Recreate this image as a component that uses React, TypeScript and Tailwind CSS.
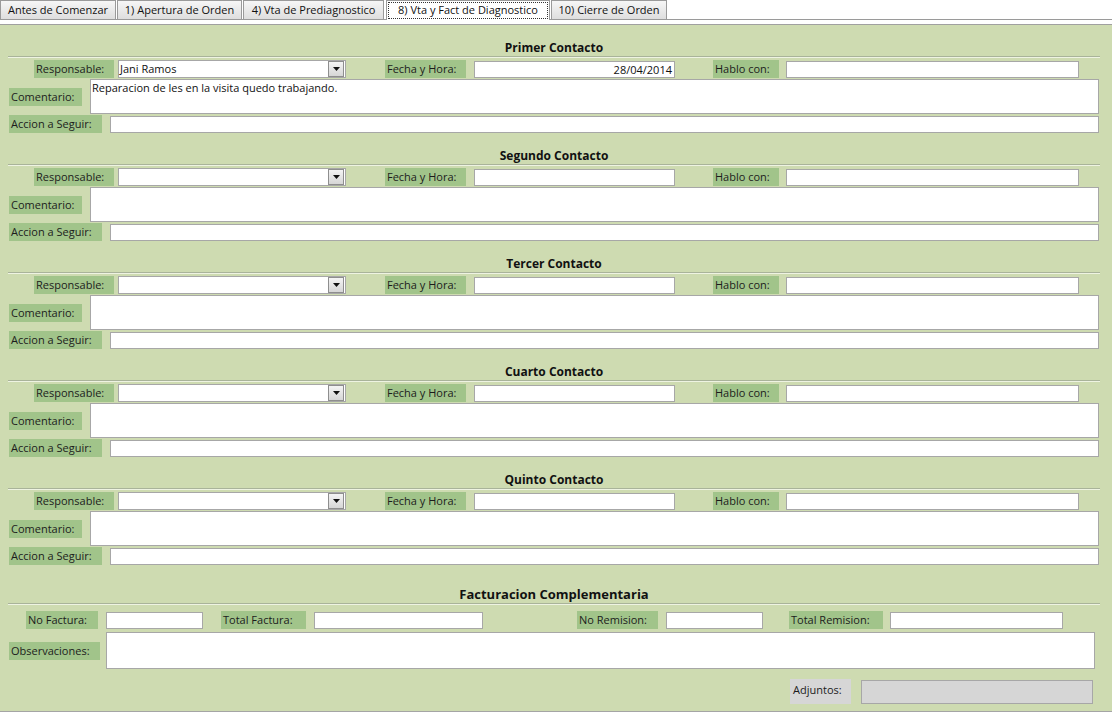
import React from "react";

const font = { fontFamily: '"Open Sans", "Noto Sans", Arial, sans-serif' };

const labelCls =
  "h-[18px] bg-[#a1c48a] px-[2px] text-[11px] leading-[18px] text-[#1c1c1c] whitespace-nowrap shrink-0";
const boxCls = "bg-white border border-[#a7a7a7] shrink-0 text-[11px] text-[#111]";

function Label({ text, w, className = "" }: { text: string; w: string; className?: string }) {
  return <div className={`${labelCls} ${w} ${className}`}>{text}</div>;
}

function Header({ title, big }: { title: string; big?: boolean }) {
  return (
    <div className="ml-[8px] w-[1092px]">
      <div
        className={`h-[17px] flex items-center justify-center font-bold text-[#111] ${
          big ? "text-[13px]" : "text-[12px]"
        }`}
      >
        {title}
      </div>
      <div className="h-[2px] border-t border-[#a9b39a] border-b border-b-[#eef3e2]" />
    </div>
  );
}

function Select({ value }: { value?: string }) {
  return (
    <div className={`${boxCls} ml-[4px] w-[228px] h-[18px] flex items-center`}>
      <div className="flex-1 pl-[1px] leading-[16px]">{value}</div>
      <div className="w-[16px] h-[16px] mr-[1px] border border-[#8e8e8e] bg-gradient-to-b from-[#f4f4f4] to-[#d6d6d6] flex items-center justify-center">
        <svg width="7" height="4" viewBox="0 0 7 4">
          <path d="M0 0h7L3.5 4z" fill="#111" />
        </svg>
      </div>
    </div>
  );
}

type Contact = { title: string; resp?: string; fecha?: string; comentario?: string };

function ContactSection({ c }: { c: Contact }) {
  return (
    <div className="mb-[14px]">
      <Header title={c.title} />
      <div className="mt-[2px] flex items-center h-[18px] pl-[34px]">
        <Label text="Responsable:" w="w-[80px]" />
        <Select value={c.resp} />
        <Label text="Fecha y Hora:" w="w-[81px]" className="ml-[39px]" />
        <div className={`${boxCls} ml-[8px] w-[201px] h-[17px] text-right pr-[2px] leading-[15px]`}>
          {c.fecha}
        </div>
        <Label text="Hablo con:" w="w-[66px]" className="ml-[38px]" />
        <div className={`${boxCls} ml-[7px] w-[293px] h-[17px]`} />
      </div>
      <div className="mt-[1px] flex items-center h-[35px] pl-[9px]">
        <Label text="Comentario:" w="w-[73px]" />
        <div className={`${boxCls} ml-[8px] w-[1009px] h-[35px] pl-[1px] pt-[1px] leading-[14px]`}>
          {c.comentario}
        </div>
      </div>
      <div className="mt-[1px] flex items-center h-[18px] pl-[9px]">
        <Label text="Accion a Seguir:" w="w-[93px]" />
        <div className={`${boxCls} ml-[8px] w-[989px] h-[17px]`} />
      </div>
    </div>
  );
}

const contacts: Contact[] = [
  {
    title: "Primer Contacto",
    resp: "Jani Ramos",
    fecha: "28/04/2014",
    comentario: "Reparacion de les en la visita quedo trabajando.",
  },
  { title: "Segundo Contacto" },
  { title: "Tercer Contacto" },
  { title: "Cuarto Contacto" },
  { title: "Quinto Contacto" },
];

const tabs = [
  { label: "Antes de Comenzar", w: "w-[116px]", ml: "" },
  { label: "1) Apertura de Orden", w: "w-[125px]", ml: "ml-[1px]" },
  { label: "4) Vta de Prediagnostico", w: "w-[141px]", ml: "ml-[1px]" },
  { label: "8) Vta y Fact de Diagnostico", w: "w-[164px]", ml: "ml-[2px]", active: true },
  { label: "10) Cierre de Orden", w: "w-[116px]", ml: "ml-[1px]" },
];

export default function App() {
  return (
    <div className="w-[1112px] h-[712px] bg-white overflow-hidden" style={font}>
      {/* Tabs */}
      <div className="h-[20px] flex items-end relative">
        <div className="absolute left-0 right-0 bottom-0 h-px bg-[#9a9a9a]" />
        {tabs.map((t) =>
          t.active ? (
            <div
              key={t.label}
              className={`${t.ml} ${t.w} h-[20px] bg-white border border-b-0 border-[#9a9a9a] relative z-10 px-[1px] pt-[1px]`}
            >
              <div className="h-[17px] border border-dotted border-[#333] text-[11px] leading-[14px] text-center text-[#111]">
                {t.label}
              </div>
            </div>
          ) : (
            <div
              key={t.label}
              className={`${t.ml} ${t.w} h-[19px] mb-px bg-gradient-to-b from-[#f6f6f6] to-[#dedede] border border-b-0 border-[#9a9a9a] text-[11px] leading-[18px] text-center text-[#111] relative z-10`}
            >
              {t.label}
            </div>
          )
        )}
      </div>
      <div className="h-[5px] border-b border-[#a0a0a0]" />

      {/* Form body */}
      <div className="h-[687px] bg-[#cedbb1] border-b border-[#a5a5a5] pt-[14px]">
        {contacts.map((c) => (
          <ContactSection key={c.title} c={c} />
        ))}

        <div className="mt-[21px]">
          <Header title="Facturacion Complementaria" big />
          <div className="mt-[6px] flex items-center h-[18px] pl-[26px]">
            <Label text="No Factura:" w="w-[72px]" />
            <div className={`${boxCls} ml-[8px] w-[97px] h-[17px]`} />
            <Label text="Total Factura:" w="w-[85px]" className="ml-[18px]" />
            <div className={`${boxCls} ml-[8px] w-[169px] h-[17px]`} />
            <Label text="No Remision:" w="w-[81px]" className="ml-[94px]" />
            <div className={`${boxCls} ml-[8px] w-[97px] h-[17px]`} />
            <Label text="Total Remision:" w="w-[94px]" className="ml-[26px]" />
            <div className={`${boxCls} ml-[7px] w-[173px] h-[17px]`} />
          </div>
          <div className="mt-[3px] flex items-center h-[37px] pl-[9px]">
            <Label text="Observaciones:" w="w-[91px]" />
            <div className={`${boxCls} ml-[6px] w-[989px] h-[37px]`} />
          </div>
          <div className="mt-[10px] flex items-center justify-end h-[25px] pr-[19px]">
            <div className="h-[25px] w-[61px] bg-[#d6d6d6] px-[3px] text-[11px] leading-[22px] text-[#1c1c1c]">
              Adjuntos:
            </div>
            <div className="ml-[10px] w-[232px] h-[24px] bg-[#d6d6d6] border border-[#a7a7a7]" />
          </div>
        </div>
      </div>
    </div>
  );
}
